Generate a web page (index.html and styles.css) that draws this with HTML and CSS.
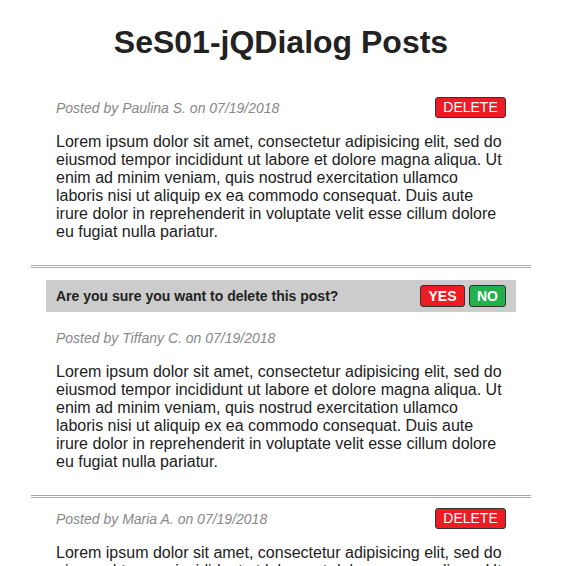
FILE: index.html
```html
<!DOCTYPE html>
<html>
<head>
<meta charset="utf-8">
<link rel="stylesheet" href="styles.css">
</head>
<body>
<div class="page">
  <h1 class="title">SeS01-jQDialog Posts</h1>
  <div class="post">
    <div class="post-head">
      <span class="meta">Posted by Paulina S. on 07/19/2018</span>
      <button class="btn btn-delete">DELETE</button>
    </div>
    <p class="post-body">Lorem ipsum dolor sit amet, consectetur adipisicing elit, sed do eiusmod tempor incididunt ut labore et dolore magna aliqua. Ut enim ad minim veniam, quis nostrud exercitation ullamco laboris nisi ut aliquip ex ea commodo consequat. Duis aute irure dolor in reprehenderit in voluptate velit esse cillum dolore eu fugiat nulla pariatur.</p>
  </div>
  <div class="post">
    <div class="confirm">
      <span class="confirm-text">Are you sure you want to delete this post?</span>
      <div class="confirm-actions">
        <button class="btn btn-yes">YES</button>
        <button class="btn btn-no">NO</button>
      </div>
    </div>
    <div class="post-head">
      <span class="meta">Posted by Tiffany C. on 07/19/2018</span>
    </div>
    <p class="post-body">Lorem ipsum dolor sit amet, consectetur adipisicing elit, sed do eiusmod tempor incididunt ut labore et dolore magna aliqua. Ut enim ad minim veniam, quis nostrud exercitation ullamco laboris nisi ut aliquip ex ea commodo consequat. Duis aute irure dolor in reprehenderit in voluptate velit esse cillum dolore eu fugiat nulla pariatur.</p>
  </div>
  <div class="post">
    <div class="post-head">
      <span class="meta">Posted by Maria A. on 07/19/2018</span>
      <button class="btn btn-delete">DELETE</button>
    </div>
    <p class="post-body">Lorem ipsum dolor sit amet, consectetur adipisicing elit, sed do eiusmod tempor incididunt ut labore et dolore magna aliqua. Ut enim ad minim veniam, quis nostrud exercitation ullamco laboris nisi ut aliquip ex ea commodo consequat. Duis aute irure dolor in reprehenderit in voluptate velit esse cillum dolore eu fugiat nulla pariatur.</p>
  </div>
</div>
</body>
</html>
```

FILE: styles.css
```css
html, body {
  margin: 0;
  padding: 0;
  background: #fff;
}
body {
  font-family: "Liberation Sans", Arial, sans-serif;
  color: #222;
  overflow: hidden;
}
.page {
  width: 500px;
  margin-left: 31px;
}
.title {
  font-size: 32px;
  line-height: 37px;
  font-weight: bold;
  text-align: center;
  margin: 24px 0 26px;
  color: #222;
}
.post {
  padding: 10px 25px 24px;
  border-bottom: 3px double #aaa;
}
.post-head {
  display: flex;
  justify-content: space-between;
  align-items: center;
  min-height: 21px;
}
.meta {
  font-size: 14px;
  font-style: italic;
  color: #888;
}
.post-body {
  font-size: 16px;
  line-height: 18px;
  margin: 15px 0 0;
  color: #222;
}
.btn {
  font-family: "Liberation Sans", Arial, sans-serif;
  font-size: 14px;
  color: #fff;
  border: 1px solid #333;
  border-radius: 3px;
  height: 22px;
  line-height: 20px;
  padding: 0 7px;
  margin: 0;
  cursor: pointer;
}
.btn-delete {
  background: #ed1c24;
  width: 71px;
  height: 21px;
  line-height: 19px;
}
.confirm {
  display: flex;
  justify-content: space-between;
  align-items: center;
  background: #ccc;
  height: 32px;
  margin: 2px -10px 15px;
  padding: 0 10px;
}
.confirm-text {
  font-size: 14px;
  font-weight: bold;
  color: #222;
}
.confirm-actions {
  display: flex;
  gap: 4px;
}
.btn-yes {
  background: #ed1c24;
  font-weight: bold;
  width: 45px;
}
.btn-no {
  background: #22b14c;
  font-weight: bold;
  width: 37px;
}
```
